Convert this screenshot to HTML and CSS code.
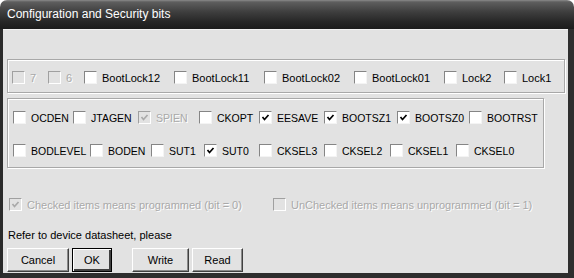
FILE: index.html
```html
<!DOCTYPE html>
<html lang="en">
<head>
    <meta charset="UTF-8">
    <title>Configuration and Security bits</title>
    <link rel="stylesheet" href="styles.css">
</head>
<body>
    <div class="window">
        <!-- Title Bar -->
        <div class="titlebar">Configuration and Security bits</div>

        <div class="frame">
            <div class="content">
                <!-- Lock bits -->
                <div class="group group-lock">
                    <div class="row row-lock">
                        <label class="item disabled"><span class="cb dis"></span>7</label>
                        <label class="item disabled"><span class="cb dis"></span>6</label>
                        <label class="item"><span class="cb"></span>BootLock12</label>
                        <label class="item"><span class="cb"></span>BootLock11</label>
                        <label class="item"><span class="cb"></span>BootLock02</label>
                        <label class="item"><span class="cb"></span>BootLock01</label>
                        <label class="item"><span class="cb"></span>Lock2</label>
                        <label class="item"><span class="cb"></span>Lock1</label>
                    </div>
                </div>

                <!-- Fuse bits -->
                <div class="group group-fuse">
                    <div class="row row-fuse-high">
                        <label class="item caps"><span class="cb"></span>OCDEN</label>
                        <label class="item caps"><span class="cb"></span>JTAGEN</label>
                        <label class="item caps disabled"><span class="cb dis"><svg viewBox="0 0 9 9"><polyline points="1.5,4 3.5,6.5 7.5,2"/></svg></span>SPIEN</label>
                        <label class="item caps"><span class="cb"></span>CKOPT</label>
                        <label class="item caps"><span class="cb"><svg viewBox="0 0 9 9"><polyline points="1.5,4 3.5,6.5 7.5,2"/></svg></span>EESAVE</label>
                        <label class="item caps"><span class="cb"><svg viewBox="0 0 9 9"><polyline points="1.5,4 3.5,6.5 7.5,2"/></svg></span>BOOTSZ1</label>
                        <label class="item caps"><span class="cb"><svg viewBox="0 0 9 9"><polyline points="1.5,4 3.5,6.5 7.5,2"/></svg></span>BOOTSZ0</label>
                        <label class="item caps"><span class="cb"></span>BOOTRST</label>
                    </div>
                    <div class="row row-fuse-low">
                        <label class="item caps"><span class="cb"></span>BODLEVEL</label>
                        <label class="item caps"><span class="cb"></span>BODEN</label>
                        <label class="item caps"><span class="cb"></span>SUT1</label>
                        <label class="item caps"><span class="cb"><svg viewBox="0 0 9 9"><polyline points="1.5,4 3.5,6.5 7.5,2"/></svg></span>SUT0</label>
                        <label class="item caps"><span class="cb"></span>CKSEL3</label>
                        <label class="item caps"><span class="cb"></span>CKSEL2</label>
                        <label class="item caps"><span class="cb"></span>CKSEL1</label>
                        <label class="item caps"><span class="cb"></span>CKSEL0</label>
                    </div>
                </div>

                <!-- Legend -->
                <div class="row row-legend">
                    <label class="item disabled"><span class="cb dis"><svg viewBox="0 0 9 9"><polyline points="1.5,4 3.5,6.5 7.5,2"/></svg></span>Checked items means programmed (bit = 0)</label>
                    <label class="item disabled"><span class="cb dis"></span>UnChecked items means unprogrammed (bit = 1)</label>
                </div>

                <p class="note">Refer to device datasheet, please</p>

                <div class="buttons">
                    <button class="btn btn-cancel">Cancel</button>
                    <button class="btn btn-ok default">OK</button>
                    <button class="btn btn-write">Write</button>
                    <button class="btn btn-read">Read</button>
                </div>
            </div>
        </div>
    </div>
</body>
</html>
```
FILE: styles.css
```css
/* General Reset */
* {
    margin: 0;
    padding: 0;
    box-sizing: border-box;
}

body {
    background: #fff;
    font-family: 'Liberation Sans', Arial, sans-serif;
    font-size: 11px;
    color: #000;
}

/* Window */
.window {
    width: 574px;
    height: 278px;
    display: flex;
    flex-direction: column;
}

.titlebar {
    height: 29px;
    flex: none;
    padding: 7px 0 0 7px;
    color: #fff;
    font-size: 12px;
    border-radius: 7px 7px 0 0;
    background: linear-gradient(#8a8a8a 0, #5e5e5e 2px, #3e3e3e 12px, #262626 22px, #1c1c1c 100%);
}

.frame {
    flex: 1;
    display: flex;
    border-left: 3px solid #2a2a2a;
    border-right: 6px solid #2e2e2e;
    border-bottom: 5px solid #2e2e2e;
    box-shadow: inset -3px -3px 0 #7a7a7a;
}

.content {
    flex: 1;
    background: #e2e2e2;
    border-top: 1px solid #f2f2f2;
    padding: 29px 0 0 4px;
    display: flex;
    flex-direction: column;
}

/* Group boxes (etched) */
.group {
    border: 1px solid #a8a8a8;
    box-shadow: 1px 1px 0 #fff, inset 1px 1px 0 #fff;
}

.group-lock {
    width: 558px;
    height: 34px;
    padding: 11px 0 0 4px;
}

.group-fuse {
    width: 537px;
    height: 70px;
    margin-top: 5px;
    padding: 12px 0 0 5px;
}

.row {
    display: grid;
    align-items: center;
}

.row-lock {
    grid-template-columns: 36px 36px 90px 90px 90px 90px 60px auto;
}

.row-fuse-high {
    grid-template-columns: 60px 65px 61px 60px 65px 73px 72px auto;
}

.row-fuse-low {
    margin-top: 20px;
    grid-template-columns: 77px 61px 53px 55px 65px 66px 66px auto;
}

.row-legend {
    margin-top: 30px;
    padding-left: 2px;
    grid-template-columns: 264px auto;
}

/* Check items */
.item {
    display: flex;
    align-items: center;
    height: 13px;
    white-space: nowrap;
}

.item.caps {
    font-size: 10.5px;
}

.item.disabled {
    color: #a9a9a9;
    text-shadow: 1px 1px 0 #fff;
}

.cb {
    width: 13px;
    height: 13px;
    flex: none;
    margin-right: 5px;
    background: #fff;
    border-top: 1px solid #858585;
    border-left: 1px solid #858585;
    border-right: 1px solid #f4f4f4;
    border-bottom: 1px solid #f4f4f4;
    display: flex;
    align-items: center;
    justify-content: center;
}

.cb svg {
    width: 9px;
    height: 9px;
    fill: none;
    stroke: #000;
    stroke-width: 1.7;
}

.cb.dis {
    background: #e2e2e2;
    border-right-color: #fff;
    border-bottom-color: #fff;
    border-top-color: #a0a0a0;
    border-left-color: #a0a0a0;
}

.cb.dis svg {
    stroke: #a9a9a9;
}

.note {
    margin-top: 18px;
    padding-left: 1px;
    line-height: 13px;
}

/* Buttons */
.buttons {
    display: flex;
    margin-top: 6px;
}

.btn {
    height: 24px;
    font-family: 'Liberation Sans', Arial, sans-serif;
    font-size: 11px;
    color: #000;
    background: #e2e2e2;
    border: 1px solid;
    border-color: #fff #404040 #404040 #fff;
    box-shadow: inset -1px -1px 0 #8a8a8a;
}

.btn.default {
    border: 1px solid #000;
    box-shadow: inset 1px 1px 0 #fff, inset -2px -2px 0 #404040;
}

.btn-cancel {
    width: 62px;
}

.btn-ok {
    width: 40px;
    margin-left: 3px;
}

.btn-write {
    width: 57px;
    margin-left: 20px;
}

.btn-read {
    width: 51px;
    margin-left: 3px;
}
```
